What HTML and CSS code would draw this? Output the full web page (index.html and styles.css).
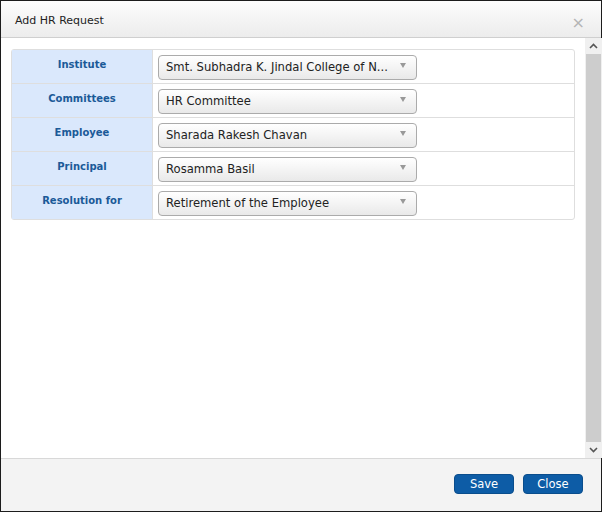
FILE: index.html
```html
<!DOCTYPE html>
<html lang="en">
<head>
  <meta charset="UTF-8" />
  <title>Add HR Request</title>
  <link rel="stylesheet" href="styles.css">
</head>
<body>
  <div class="dialog">
    <div class="dialog-header">
      <span class="dialog-title">Add HR Request</span>
      <span class="dialog-close">&times;</span>
    </div>
    <div class="dialog-body">
      <div class="dialog-content">
        <table class="form-table">
          <tr>
            <th>Institute</th>
            <td><div class="select"><span>Smt. Subhadra K. Jindal College of N...</span><i class="caret"></i></div></td>
          </tr>
          <tr>
            <th>Committees</th>
            <td><div class="select"><span>HR Committee</span><i class="caret"></i></div></td>
          </tr>
          <tr>
            <th>Employee</th>
            <td><div class="select"><span>Sharada Rakesh Chavan</span><i class="caret"></i></div></td>
          </tr>
          <tr>
            <th>Principal</th>
            <td><div class="select"><span>Rosamma Basil</span><i class="caret"></i></div></td>
          </tr>
          <tr>
            <th>Resolution for</th>
            <td><div class="select"><span>Retirement of the Employee</span><i class="caret"></i></div></td>
          </tr>
        </table>
      </div>
      <div class="scrollbar">
        <div class="scroll-btn">
          <svg width="9" height="6" viewBox="0 0 9 6"><path d="M1 5 L4.5 1.5 L8 5" fill="none" stroke="#555" stroke-width="1.6"/></svg>
        </div>
        <div class="scroll-thumb"></div>
        <div class="scroll-btn">
          <svg width="9" height="6" viewBox="0 0 9 6"><path d="M1 1 L4.5 4.5 L8 1" fill="none" stroke="#555" stroke-width="1.6"/></svg>
        </div>
      </div>
    </div>
    <div class="dialog-footer">
      <button class="btn">Save</button>
      <button class="btn">Close</button>
    </div>
  </div>
</body>
</html>
```

FILE: styles.css
```css
:root {
  --label-bg: #dae8fc;
  --label-text: #1b5a98;
  --line: #dedede;
  --btn-bg: #0d5ca6;
}
* { box-sizing: border-box; margin: 0; padding: 0; }
body { font-family: "DejaVu Sans", Verdana, sans-serif; background: #fff; color: #222; }

.dialog { width: 602px; height: 512px; border: 1px solid #1c1c1c; display: flex; flex-direction: column; background: #fff; }

.dialog-header { height: 37px; flex: none; display: flex; justify-content: space-between; align-items: center; padding: 0 16px 0 14px; background: linear-gradient(#fdfdfd, #ececec); border-bottom: 1px solid #cfcfcf; }
.dialog-title { font-size: 11px; color: #222; margin-top: 2px; }
.dialog-close { font-size: 16px; color: #b5b5b5; margin-top: 6px; }

.dialog-body { flex: 1; display: flex; min-height: 0; }
.dialog-content { flex: 1; padding: 11px 10px 0 10px; }

.form-table { width: 564px; border-collapse: separate; border-spacing: 0; border: 1px solid var(--line); border-radius: 3px; }
.form-table th, .form-table td { height: 34px; border-bottom: 1px solid var(--line); }
.form-table tr:last-child th, .form-table tr:last-child td { border-bottom: none; height: 33px; }
.form-table th { width: 141px; background: var(--label-bg); color: var(--label-text); font-size: 10px; font-weight: bold; text-align: center; vertical-align: top; padding-top: 9px; border-right: 1px solid var(--line); }
.form-table td { padding: 0 5px; vertical-align: middle; }

.select { width: 259px; height: 25px; display: flex; align-items: center; justify-content: space-between; padding: 0 10px 0 7px; border: 1px solid #ababab; border-radius: 4px; background: linear-gradient(#ffffff, #e9e9e9); font-size: 11.6px; color: #222; margin-top: 1px; }
.caret { width: 0; height: 0; border-left: 3.5px solid transparent; border-right: 3.5px solid transparent; border-top: 5px solid #999; margin-top: -3px; }

.scrollbar { width: 17px; flex: none; background: #f0f0f0; display: flex; flex-direction: column; align-items: center; }
.scroll-btn { height: 16px; flex: none; display: flex; align-items: center; justify-content: center; }
.scroll-thumb { flex: 1; width: 15px; background: #cdcdcd; }

.dialog-footer { height: 53px; flex: none; display: flex; justify-content: flex-end; align-items: center; gap: 9px; padding: 0 18px 3px 0; background: #f3f3f3; border-top: 1px solid #d8d8d8; }
.btn { width: 60px; height: 20px; background: var(--btn-bg); border: 1px solid #0a4d8c; border-radius: 4px; color: #fff; font-family: "DejaVu Sans", Verdana, sans-serif; font-size: 11.5px; cursor: pointer; }
```
